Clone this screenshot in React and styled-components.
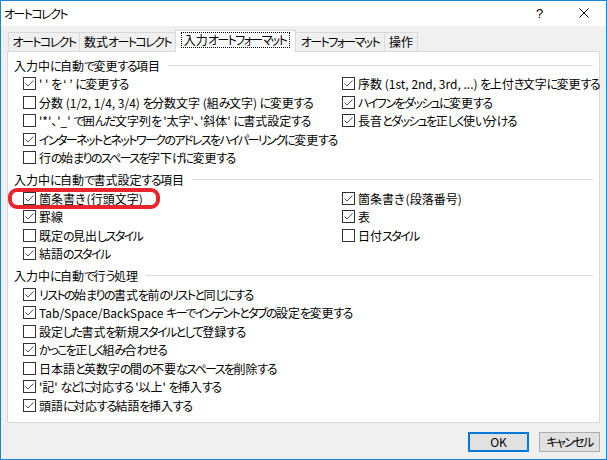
import React from "react";
import styled, { createGlobalStyle } from "styled-components";

const GlobalStyle = createGlobalStyle`
  body {
    margin: 0;
    font-family: "Noto Sans CJK JP", "Noto Sans", sans-serif;
    font-size: 12px;
    font-feature-settings: "palt";
    color: #000;
  }
`;

const Window = styled.div`
  width: 607px;
  height: 460px;
  box-sizing: border-box;
  border: 1px solid #1883d7;
  display: flex;
  flex-direction: column;
  background: #f0f0f0;
  overflow: hidden;
`;

const TitleBar = styled.div`
  height: 25px;
  background: #fff;
  display: flex;
  align-items: center;
  padding-left: 3px;
  line-height: 1;
`;

const Title = styled.div`
  flex: 1;
`;

const Help = styled.div`
  width: 14px;
  margin-right: 29px;
  font-family: "Liberation Sans", sans-serif;
  font-size: 13px;
`;

const CloseIcon = styled.svg`
  width: 10px;
  height: 10px;
  margin-right: 17px;
  margin-top: -1px;
`;

const Body = styled.div`
  flex: 1;
  display: flex;
  flex-direction: column;
  padding: 4px 6px 7px 6px;
`;

const TabStrip = styled.div`
  height: 21px;
  display: flex;
  align-items: flex-end;
  padding-left: 1px;
  position: relative;
  z-index: 1;
`;

const Tab = styled.div`
  width: ${(p) => p.$w}px;
  box-sizing: border-box;
  height: ${(p) => (p.$active ? 22 : 19)}px;
  margin-bottom: ${(p) => (p.$active ? -1 : 0)}px;
  margin-right: -1px;
  border: 1px solid #d9d9d9;
  border-bottom: none;
  background: ${(p) => (p.$active ? "#fff" : "#f0f0f0")};
  display: flex;
  align-items: center;
  justify-content: center;
  padding-bottom: ${(p) => (p.$active ? 3 : 1)}px;
  white-space: nowrap;
  position: relative;
  z-index: ${(p) => (p.$active ? 2 : 1)};
`;

const Focus = styled.span`
  border: 1px dotted #000;
  padding: 0 3px 0 2px;
  line-height: 14px;
`;

const Label = styled.span`
  white-space: pre;
`;

// kana runs are squeezed to approximate the narrow kana of the system UI font
const Kana = styled.span`
  letter-spacing: -1.6px;
`;

const Panel = styled.div`
  height: 372px;
  box-sizing: border-box;
  background: #fff;
  border: 1px solid #d9d9d9;
  padding: 4px 6px 0 6px;
`;

const Group = styled.div`
  & + & {
    margin-top: 3.5px;
  }
`;

const Heading = styled.div`
  height: 18.5px;
  display: flex;
  align-items: center;
  white-space: nowrap;

  &::after {
    content: "";
    flex: 1;
    height: 1px;
    background: #dcdcdc;
    margin-left: 8px;
  }
`;

const Columns = styled.div`
  display: grid;
  grid-template-columns: 319px 1fr;
  padding-left: 9px;
`;

const Column = styled.div`
  display: flex;
  flex-direction: column;
`;

const Item = styled.div`
  height: 18.5px;
  display: flex;
  align-items: center;
  white-space: nowrap;
  position: relative;
`;

const Box = styled.span`
  width: 13px;
  height: 13px;
  box-sizing: border-box;
  border: 1px solid #333;
  background: #fff;
  margin-right: 3px;
  flex-shrink: 0;
  display: flex;
`;

const Highlight = styled.span`
  position: absolute;
  left: -15px;
  top: -1px;
  width: 152px;
  height: 21px;
  box-sizing: border-box;
  border: 4px solid #e8242c;
  border-radius: 9px;
  pointer-events: none;
`;

const Buttons = styled.div`
  display: flex;
  justify-content: flex-end;
  gap: 10px;
  margin-top: 9px;
`;

const Button = styled.button`
  width: 61px;
  height: 20px;
  box-sizing: border-box;
  font: inherit;
  padding: 0;
  background: #e1e1e1;
  border: ${(p) => (p.$default ? "2px solid #0078d7" : "1px solid #adadad")};
  color: #000;
  line-height: 1;
`;

const jp = (text) => (
  <Label>
    {text
      .split(/([\u3041-\u30ff]+)/)
      .map((part, i) =>
        /[\u3041-\u30ff]/.test(part) ? <Kana key={i}>{part}</Kana> : part
      )}
  </Label>
);

const Check = ({ on }) => (
  <Box>
    {on && (
      <svg width="11" height="11" viewBox="0 0 11 11">
        <polyline
          points="1.5,5.5 4,8 9.5,2.5"
          fill="none"
          stroke="#555"
          strokeWidth="1"
        />
      </svg>
    )}
  </Box>
);

const Option = ({ on, label, marked }) => (
  <Item>
    {marked && <Highlight />}
    <Check on={on} />
    {jp(label)}
  </Item>
);

const groups = [
  {
    title: "入力中に自動で変更する項目",
    left: [
      [true, "' ' を ‘ ’ に変更する"],
      [false, "分数 (1/2, 1/4, 3/4) を分数文字 (組み文字) に変更する"],
      [false, "'*'、'_' で囲んだ文字列を '太字'、'斜体' に書式設定する"],
      [true, "インターネットとネットワークのアドレスをハイパーリンクに変更する"],
      [false, "行の始まりのスペースを字下げに変更する"],
    ],
    right: [
      [true, "序数 (1st, 2nd, 3rd, ...) を上付き文字に変更する"],
      [true, "ハイフンをダッシュに変更する"],
      [true, "長音とダッシュを正しく使い分ける"],
    ],
  },
  {
    title: "入力中に自動で書式設定する項目",
    left: [
      [true, "箇条書き (行頭文字)", true],
      [true, "罫線"],
      [false, "既定の見出しスタイル"],
      [true, "結語のスタイル"],
    ],
    right: [
      [true, "箇条書き (段落番号)"],
      [true, "表"],
      [false, "日付スタイル"],
    ],
  },
  {
    title: "入力中に自動で行う処理",
    left: [
      [true, "リストの始まりの書式を前のリストと同じにする"],
      [true, "Tab/Space/BackSpace キーでインデントとタブの設定を変更する"],
      [false, "設定した書式を新規スタイルとして登録する"],
      [true, "かっこを正しく組み合わせる"],
      [false, "日本語と英数字の間の不要なスペースを削除する"],
      [true, "'記' などに対応する '以上' を挿入する"],
      [true, "頭語に対応する結語を挿入する"],
    ],
    right: [],
  },
];

const tabs = [
  ["オートコレクト", 72],
  ["数式オートコレクト", 97],
  ["入力オートフォーマット", 121, true],
  ["オートフォーマット", 90],
  ["操作", 34],
];

const App = () => {
  return (
    <>
      <GlobalStyle />
      <Window>
        <TitleBar>
          <Title>{jp("オートコレクト")}</Title>
          <Help>?</Help>
          <CloseIcon viewBox="0 0 10 10">
            <path d="M0.5 0.5 L9.5 9.5 M9.5 0.5 L0.5 9.5" stroke="#000" strokeWidth="1" />
          </CloseIcon>
        </TitleBar>
        <Body>
          <TabStrip>
            {tabs.map(([name, w, active]) => (
              <Tab key={name} $w={w} $active={active}>
                {active ? <Focus>{jp(name)}</Focus> : jp(name)}
              </Tab>
            ))}
          </TabStrip>
          <Panel>
            {groups.map((g) => (
              <Group key={g.title}>
                <Heading>{jp(g.title)}</Heading>
                <Columns>
                  <Column>
                    {g.left.map(([on, label, marked]) => (
                      <Option key={label} on={on} label={label} marked={marked} />
                    ))}
                  </Column>
                  <Column>
                    {g.right.map(([on, label]) => (
                      <Option key={label} on={on} label={label} />
                    ))}
                  </Column>
                </Columns>
              </Group>
            ))}
          </Panel>
          <Buttons>
            <Button $default>OK</Button>
            <Button>{jp("キャンセル")}</Button>
          </Buttons>
        </Body>
      </Window>
    </>
  );
};

export default App;
